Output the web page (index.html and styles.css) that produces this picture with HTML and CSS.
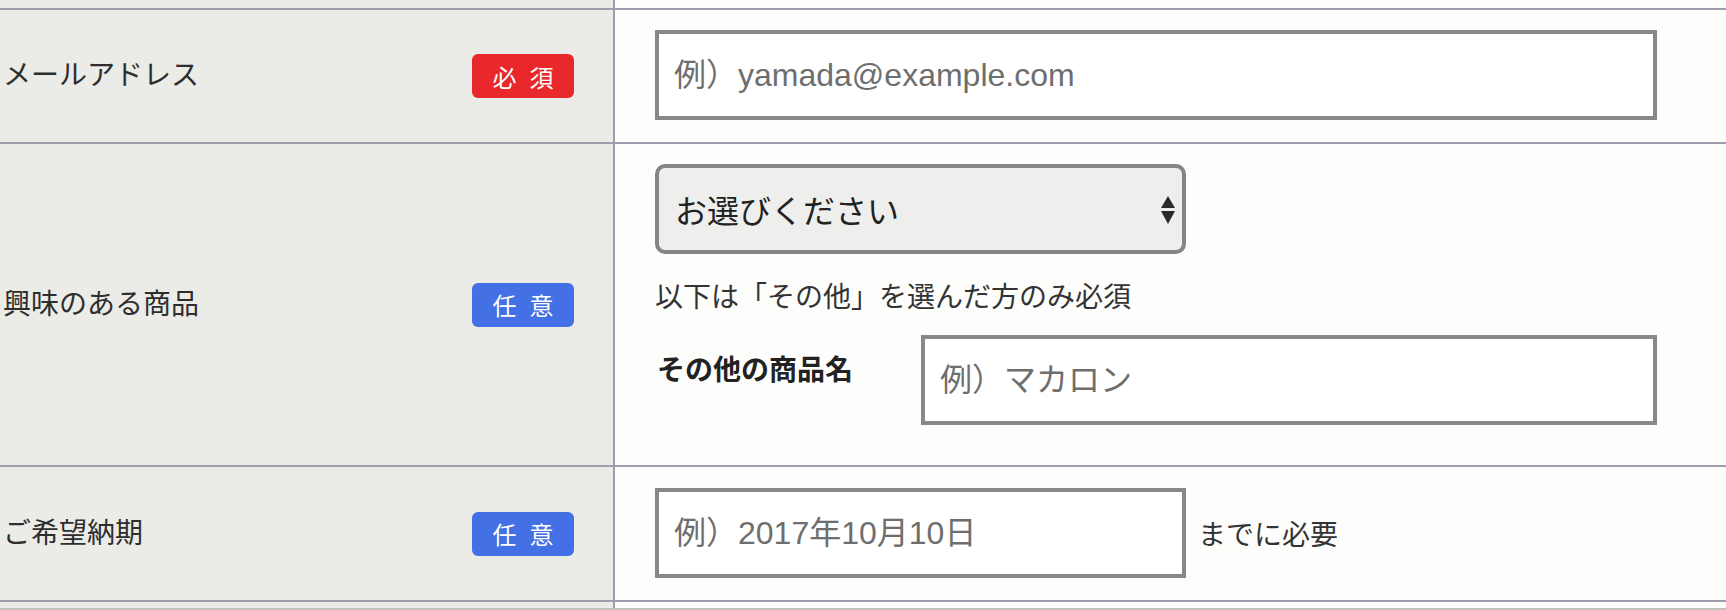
FILE: index.html
```html
<!DOCTYPE html>
<html lang="ja">
<head>
<meta charset="utf-8">
<title>Form</title>
<link rel="stylesheet" href="styles.css">
</head>
<body>
<div class="form">
  <div class="row stub-top">
    <div class="th"></div>
    <div class="td"></div>
  </div>

  <div class="row row-mail">
    <div class="th">
      <span class="label">メールアドレス</span>
      <span class="badge req">必須</span>
    </div>
    <div class="td">
      <input class="field field-mail" type="text" placeholder="例）yamada@example.com">
    </div>
  </div>

  <div class="row row-product">
    <div class="th">
      <span class="label">興味のある商品</span>
      <span class="badge opt">任意</span>
    </div>
    <div class="td">
      <span class="select-wrap">
        <select class="select">
          <option>お選びください</option>
        </select>
        <svg class="select-arrows" width="14" height="29" viewBox="0 0 14 29">
          <polygon points="0,12 7,0 14,12" fill="#2b2b2b"/>
          <polygon points="0,15 14,15 7,28" fill="#2b2b2b"/>
        </svg>
      </span>
      <p class="note">以下は「その他」を選んだ方のみ必須</p>
      <div class="sub">
        <span class="sub-label">その他の商品名</span>
        <input class="field field-sub" type="text" placeholder="例）マカロン">
      </div>
    </div>
  </div>

  <div class="row row-date">
    <div class="th">
      <span class="label">ご希望納期</span>
      <span class="badge opt">任意</span>
    </div>
    <div class="td td-inline">
      <input class="field field-date" type="text" placeholder="例）2017年10月10日">
      <span class="suffix">までに必要</span>
    </div>
  </div>

  <div class="row stub-bottom">
    <div class="th"></div>
    <div class="td"></div>
  </div>
</div>
</body>
</html>
```

FILE: styles.css
```css
html, body {
  margin: 0;
  padding: 0;
  background: #fdfdfb;
  overflow: hidden;
}

body {
  width: 1726px;
  height: 610px;
  font-family: "Noto Sans CJK JP", "Noto Sans", sans-serif;
  color: #333;
}

.form {
  display: flex;
  flex-direction: column;
}

.row {
  display: grid;
  grid-template-columns: 615px 1fr;
  border-bottom: 2px solid #9d9daf;
}

.th {
  background: #ebebe8;
  border-right: 2px solid #9d9daf;
  display: flex;
  align-items: center;
  justify-content: space-between;
  padding: 0 39px 0 3px;
}

.td {
  background: #fdfdfb;
  padding: 0 0 0 40px;
}

.stub-top { height: 8px; }
.stub-bottom { height: 6px; border-bottom-color: #c2c2bc; }

.label {
  font-size: 28px;
  line-height: 42px;
  color: #2e2e2e;
  padding-bottom: 6px;
}

.badge {
  width: 102px;
  height: 44px;
  box-sizing: border-box;
  border-radius: 6px;
  color: #fff;
  font-size: 24px;
  letter-spacing: 13px;
  padding-left: 13px;
  display: flex;
  align-items: center;
  justify-content: center;
}

.req { background: #e8282b; }
.opt { background: #4470e6; }

.row-mail .td { padding-top: 20px; padding-bottom: 22px; }
.row-product .td { padding-top: 20px; padding-bottom: 40px; }
.row-date .td { padding-top: 21px; padding-bottom: 22px; }

.field {
  box-sizing: border-box;
  height: 90px;
  border: 4px solid #888;
  border-radius: 0;
  background: #fff;
  padding: 0 15px;
  font-family: "Liberation Sans", "Noto Sans CJK JP", sans-serif;
  font-size: 32px;
  color: #333;
  outline: none;
  display: block;
}

.field::placeholder {
  color: #6e6e6e;
  opacity: 1;
}

.field-mail { width: 1002px; }
.field-sub { width: 736px; }
.field-date { width: 531px; }

.select-wrap {
  position: relative;
  display: block;
  width: 531px;
  height: 90px;
}

.select {
  -webkit-appearance: none;
  appearance: none;
  box-sizing: border-box;
  width: 531px;
  height: 90px;
  border: 4px solid #858585;
  border-radius: 10px;
  background: #eeeeec;
  padding: 0 16px;
  font-family: "Noto Sans CJK JP", sans-serif;
  font-size: 32px;
  color: #222;
  outline: none;
}

.select-arrows {
  position: absolute;
  right: 11px;
  top: 32px;
}

.note {
  margin: 20px 0 0;
  font-size: 28px;
  line-height: 42px;
  color: #333;
}

.sub {
  display: grid;
  grid-template-columns: 266px 1fr;
  margin-top: 19px;
}

.sub-label {
  font-size: 28px;
  font-weight: 700;
  line-height: 42px;
  color: #222;
  padding-top: 12px;
  padding-left: 2px;
}

.td-inline {
  display: flex;
  align-items: center;
  gap: 12px;
}

.suffix {
  font-size: 28px;
  line-height: 42px;
  color: #333;
}
```
